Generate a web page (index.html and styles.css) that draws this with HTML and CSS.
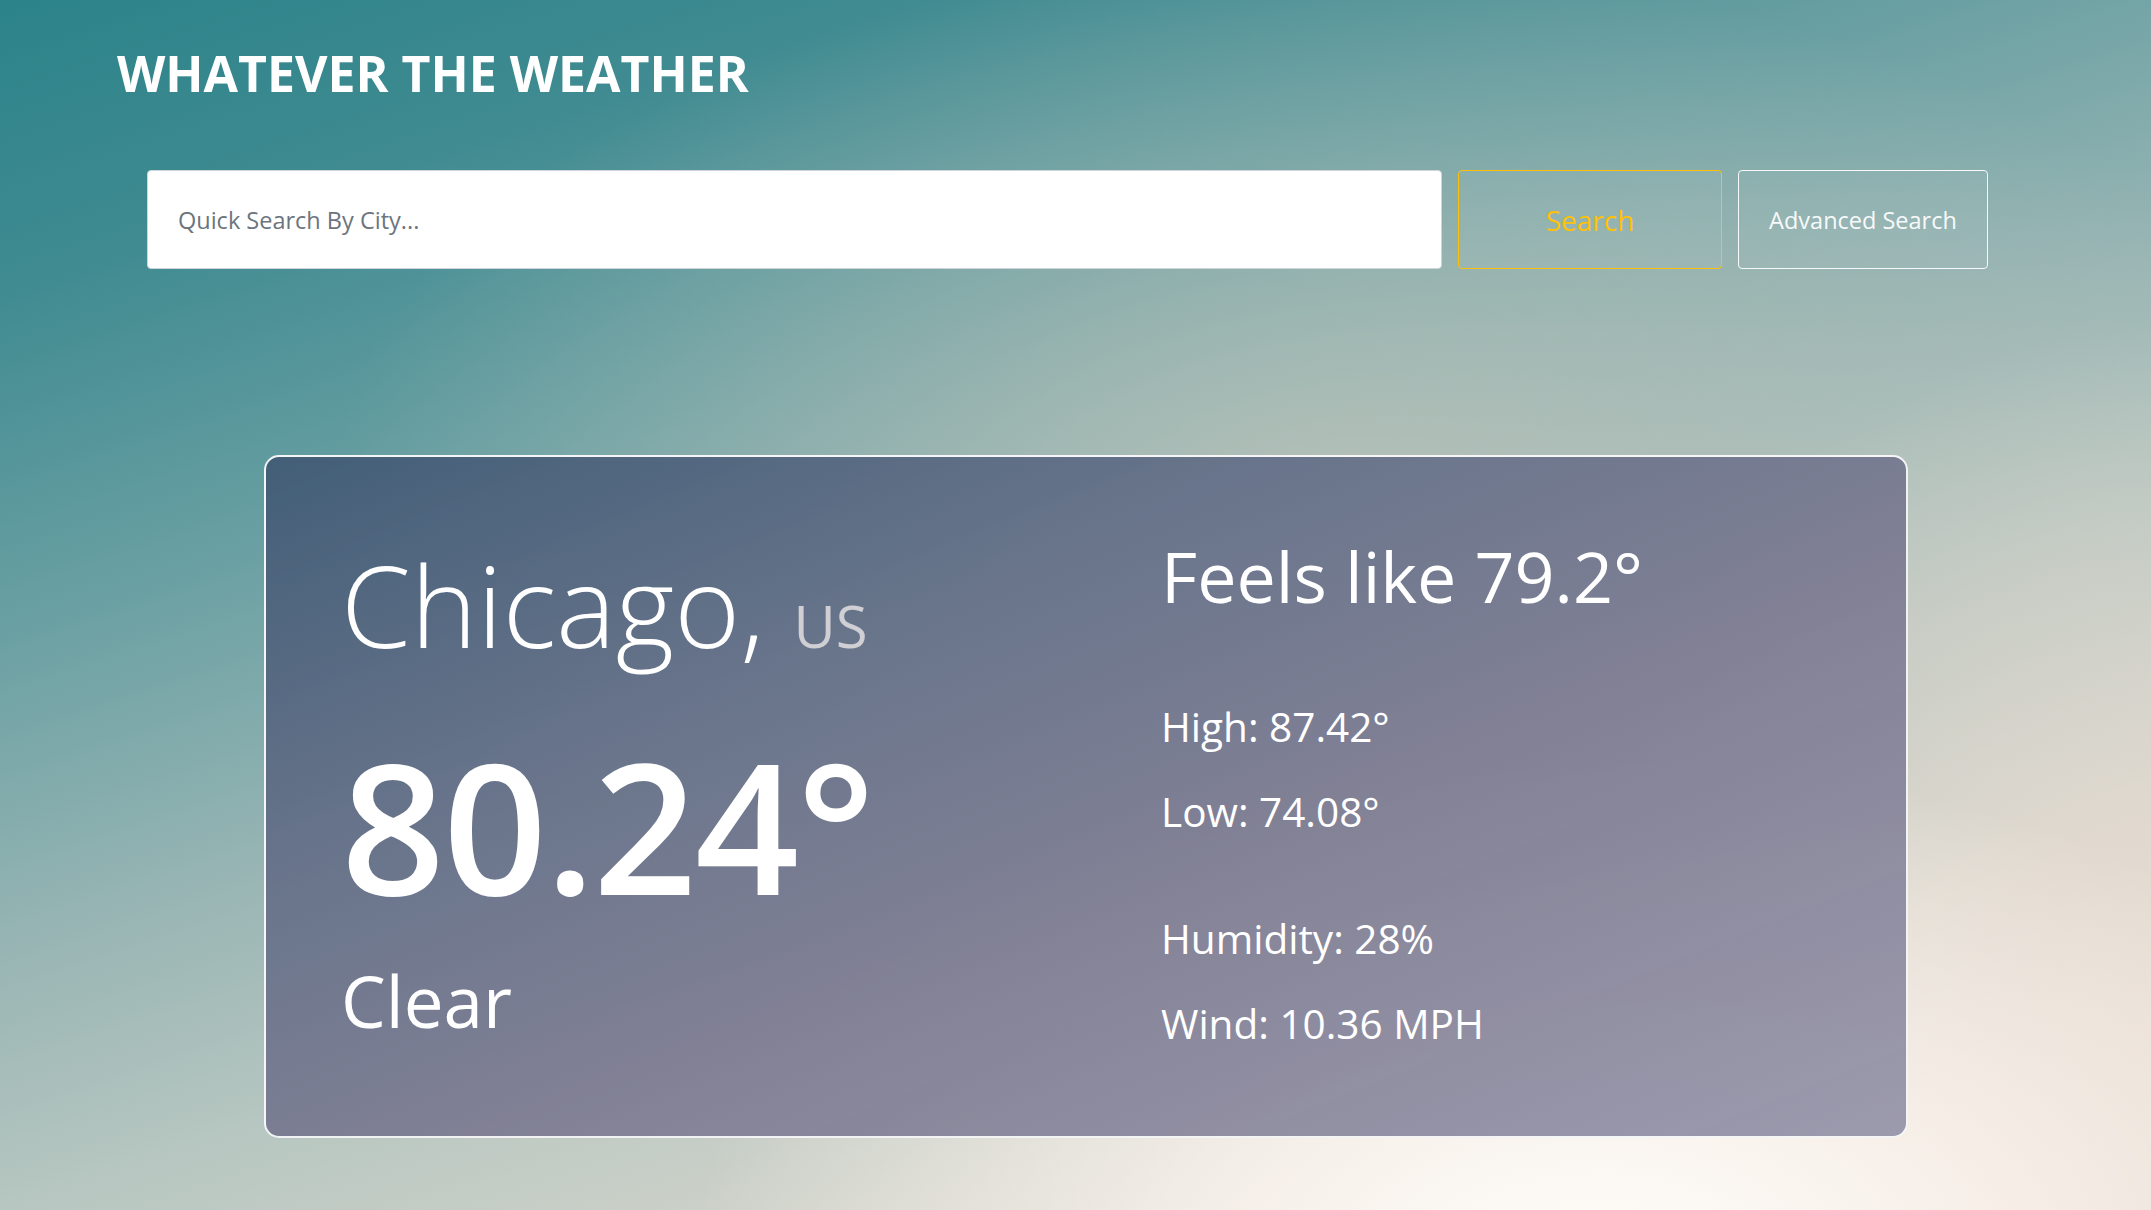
FILE: index.html
```html
<!DOCTYPE html>
<html lang="en">
<head>
<meta charset="utf-8">
<title>Whatever The Weather</title>
<link rel="stylesheet" href="styles.css">
</head>
<body>
<div class="page">
  <header class="header">
    <h1 class="title">WHATEVER THE WEATHER</h1>
  </header>
  <form class="search-row">
    <input class="search-input" type="text" placeholder="Quick Search By City...">
    <button class="btn btn-search" type="button">Search</button>
    <button class="btn btn-advanced" type="button">Advanced Search</button>
  </form>
  <main class="card">
    <section class="col-main">
      <div class="city">Chicago, <span class="country">US</span></div>
      <div class="temp">80.24°</div>
      <div class="cond">Clear</div>
    </section>
    <section class="col-details">
      <div class="feels">Feels like 79.2°</div>
      <div class="group group-first">
        <div class="stat">High: 87.42°</div>
        <div class="stat">Low: 74.08°</div>
      </div>
      <div class="group group-second">
        <div class="stat">Humidity: 28%</div>
        <div class="stat">Wind: 10.36 MPH</div>
      </div>
    </section>
  </main>
</div>
</body>
</html>
```
FILE: styles.css
```css
html, body {
  margin: 0;
  padding: 0;
  height: 100%;
}
body {
  font-family: "Open Sans", "Noto Sans", "Liberation Sans", sans-serif;
  color: #ffffff;
  overflow: hidden;
  background:
    radial-gradient(ellipse 900px 500px at 74% 104%, rgba(255,253,250,1) 0%, rgba(252,245,239,0.85) 38%, rgba(240,228,218,0) 100%),
    radial-gradient(ellipse 600px 700px at 100% 85%, rgba(232,220,210,0.9) 0%, rgba(232,220,210,0) 100%),
    radial-gradient(ellipse 1000px 520px at 62% 40%, rgba(190,196,186,0.75) 0%, rgba(190,196,186,0) 100%),
    linear-gradient(162deg, #2c838a 0%, #3f8b91 15%, #6aa0a3 33%, #98b5b4 50%, #b8c7c1 64%, #d3d4cb 80%, #e2dcd2 100%);
}
.page {
  height: 100%;
}
.header {
  padding: 43px 0 0 117px;
}
.title {
  margin: 0;
  font-size: 50px;
  line-height: 60px;
  font-weight: 700;
}
.search-row {
  display: flex;
  gap: 16px;
  margin: 67px 0 0 147px;
  width: 1841px;
  height: 99px;
}
.search-input {
  flex: 1;
  box-sizing: border-box;
  height: 99px;
  border: 1px solid #ced4da;
  border-radius: 4px;
  background: #ffffff;
  padding: 0 30px;
  font-family: inherit;
  font-size: 23.5px;
  color: #495057;
  outline: none;
}
.search-input::placeholder {
  color: #6c757d;
}
.btn {
  box-sizing: border-box;
  height: 99px;
  border-radius: 4px;
  background: rgba(255,255,255,0.04);
  font-family: inherit;
  cursor: pointer;
}
.btn-search {
  width: 264px;
  border: 1px solid #ffc107;
  color: #ffc107;
  font-size: 28px;
}
.btn-advanced {
  width: 250px;
  border: 1px solid #f8f9fa;
  color: #f8f9fa;
  font-size: 23.5px;
}
.card {
  box-sizing: border-box;
  margin: 186px 0 0 264px;
  width: 1644px;
  height: 683px;
  border: 2px solid rgba(255,255,255,0.92);
  border-radius: 15px;
  padding: 69px 0 0 75px;
  display: grid;
  grid-template-columns: 820px 1fr;
  background: linear-gradient(158deg, rgba(66,92,118,0.97) 0%, rgba(100,112,136,0.95) 30%, rgba(128,126,148,0.95) 60%, rgba(152,150,170,0.96) 100%);
}
.city {
  font-size: 112.5px;
  line-height: 158px;
  font-weight: 300;
  white-space: nowrap;
}
.country {
  font-size: 58px;
  line-height: 1;
  color: #cfcfd4;
  font-weight: 400;
}
.temp {
  margin-top: 40px;
  font-size: 182px;
  line-height: 200px;
  font-weight: 600;
  letter-spacing: -2px;
}
.cond {
  margin-top: 27px;
  font-size: 71px;
  line-height: 100px;
  font-weight: 400;
}
.feels {
  font-size: 70px;
  line-height: 100px;
  font-weight: 400;
}
.group-first {
  margin-top: 58px;
}
.group-second {
  margin-top: 42px;
}
.stat {
  font-size: 40.5px;
  line-height: 85px;
  font-weight: 400;
}
```
